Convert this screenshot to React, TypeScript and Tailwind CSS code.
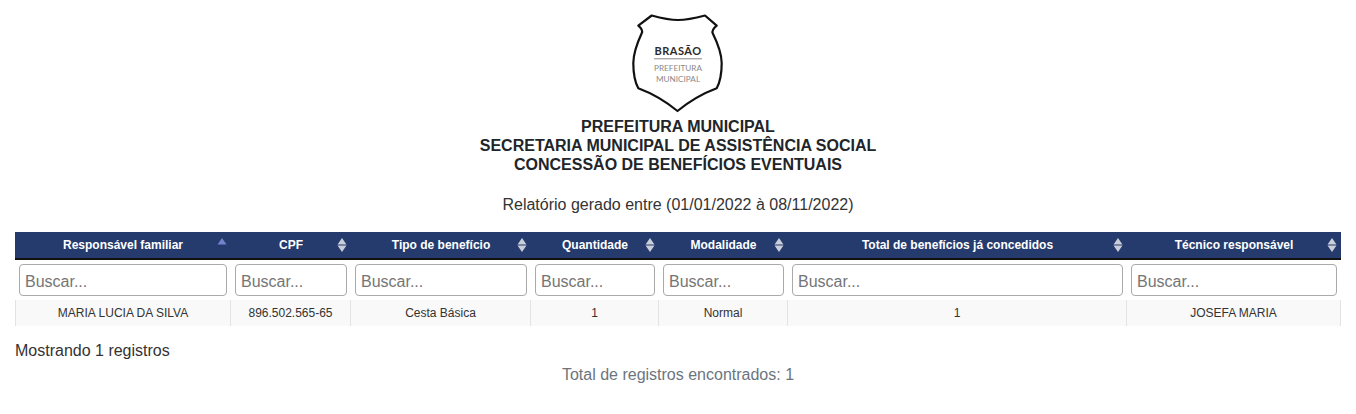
const columns = [
  { label: "Responsável familiar", width: "w-[216px]", value: "MARIA LUCIA DA SILVA", sorted: true },
  { label: "CPF", width: "w-[120px]", value: "896.502.565-65" },
  { label: "Tipo de benefício", width: "w-[180px]", value: "Cesta Básica" },
  { label: "Quantidade", width: "w-[128px]", value: "1" },
  { label: "Modalidade", width: "w-[129px]", value: "Normal" },
  { label: "Total de benefícios já concedidos", width: "w-[339px]", value: "1" },
  { label: "Técnico responsável", width: "w-[214px]", value: "JOSEFA MARIA" },
];

function Logo() {
  return (
    <svg width="92" height="100" viewBox="0 0 92 100" className="block overflow-visible">
      <path
        d="M19.7 2.5 Q36 7 46 7 Q56 7 73 2.5 L84.7 12.7 Q79.5 17 80.7 20.3 Q89.5 38 89.7 50 Q89.7 66 84.7 75.3 Q64 83 45.5 98 Q27 83 6.3 75.3 Q1.3 66 1.3 50 Q1.5 38 9.7 20.3 Q11.5 17 6.3 12.7 Z"
        fill="#fff"
        stroke="#111"
        strokeWidth="2.2"
        strokeLinejoin="round"
      />
      <text x="46" y="42" textAnchor="middle" fontSize="11" fontWeight="700" letterSpacing="0.5" fill="#2b2b2b" fontFamily="Lato, sans-serif">BRASÃO</text>
      <rect x="22" y="45" width="48" height="1.4" fill="#aaa" />
      <text x="46" y="58" textAnchor="middle" fontSize="8.2" fill="#8a8a8a" fontFamily="Lato, sans-serif">PREFEITURA</text>
      <text x="46" y="68.5" textAnchor="middle" fontSize="8.2" fill="#8a8a8a" fontFamily="Lato, sans-serif">MUNICIPAL</text>
    </svg>
  );
}

function SortIcon({ sorted }: { sorted?: boolean }) {
  return (
    <svg width="10" height="16" viewBox="0 0 10 16" className="absolute right-[4px] top-[5px]">
      {sorted ? (
        <path d="M5 1 L9.5 7.5 L0.5 7.5 Z" fill="#7482cc" />
      ) : (
        <>
          <path d="M5 1 L9.5 7.5 L0.5 7.5 Z" fill="#c9ced8" />
          <path d="M5 15 L9.5 8.5 L0.5 8.5 Z" fill="#c9ced8" />
        </>
      )}
    </svg>
  );
}

export default function App() {
  return (
    <div className="min-h-[414px] bg-white px-[15px] pt-[13px] font-['Liberation_Sans',Arial,sans-serif] text-[16px] text-[#333]">
      <div className="flex justify-center">
        <Logo />
      </div>
      <div className="mt-[4px] text-center text-[16px] font-bold leading-[19px] text-[#212529]">
        <div>PREFEITURA MUNICIPAL</div>
        <div>SECRETARIA MUNICIPAL DE ASSISTÊNCIA SOCIAL</div>
        <div>CONCESSÃO DE BENEFÍCIOS EVENTUAIS</div>
      </div>
      <p className="mt-[21px] text-center leading-[19px] text-[#333]">
        Relatório gerado entre (01/01/2022 à 08/11/2022)
      </p>
      <table className="mt-[18px] w-[1326px] table-fixed border-separate border-spacing-0">
        <thead>
          <tr>
            {columns.map((c) => (
              <th key={c.label} className={`${c.width} relative h-[28px] border-b-2 border-[#111] bg-[#253b6e] p-0 pb-[1px] text-center text-[12px] font-bold text-white`}>
                {c.label}
                <SortIcon sorted={c.sorted} />
              </th>
            ))}
          </tr>
          <tr>
            {columns.map((c) => (
              <th key={c.label} className="h-[40px] px-[4px] py-0 font-normal">
                <input
                  placeholder="Buscar..."
                  className="block h-[32px] w-full rounded-[4px] border border-[#aaa] bg-white px-[5px] pt-[4px] text-[16px] font-normal text-[#333] placeholder:text-[#757575]"
                />
              </th>
            ))}
          </tr>
        </thead>
        <tbody>
          <tr>
            {columns.map((c) => (
              <td key={c.label} className="h-[26px] border-r border-[#e3e3e3] bg-[#f9f9f9] p-0 text-center text-[12px] text-[#333] first:border-l">
                {c.value}
              </td>
            ))}
          </tr>
        </tbody>
      </table>
      <p className="mt-[15px] leading-[19px] text-[#333]">Mostrando 1 registros</p>
      <p className="mt-[5px] text-center leading-[19px] text-[#6c757d]">Total de registros encontrados: 1</p>
    </div>
  );
}
